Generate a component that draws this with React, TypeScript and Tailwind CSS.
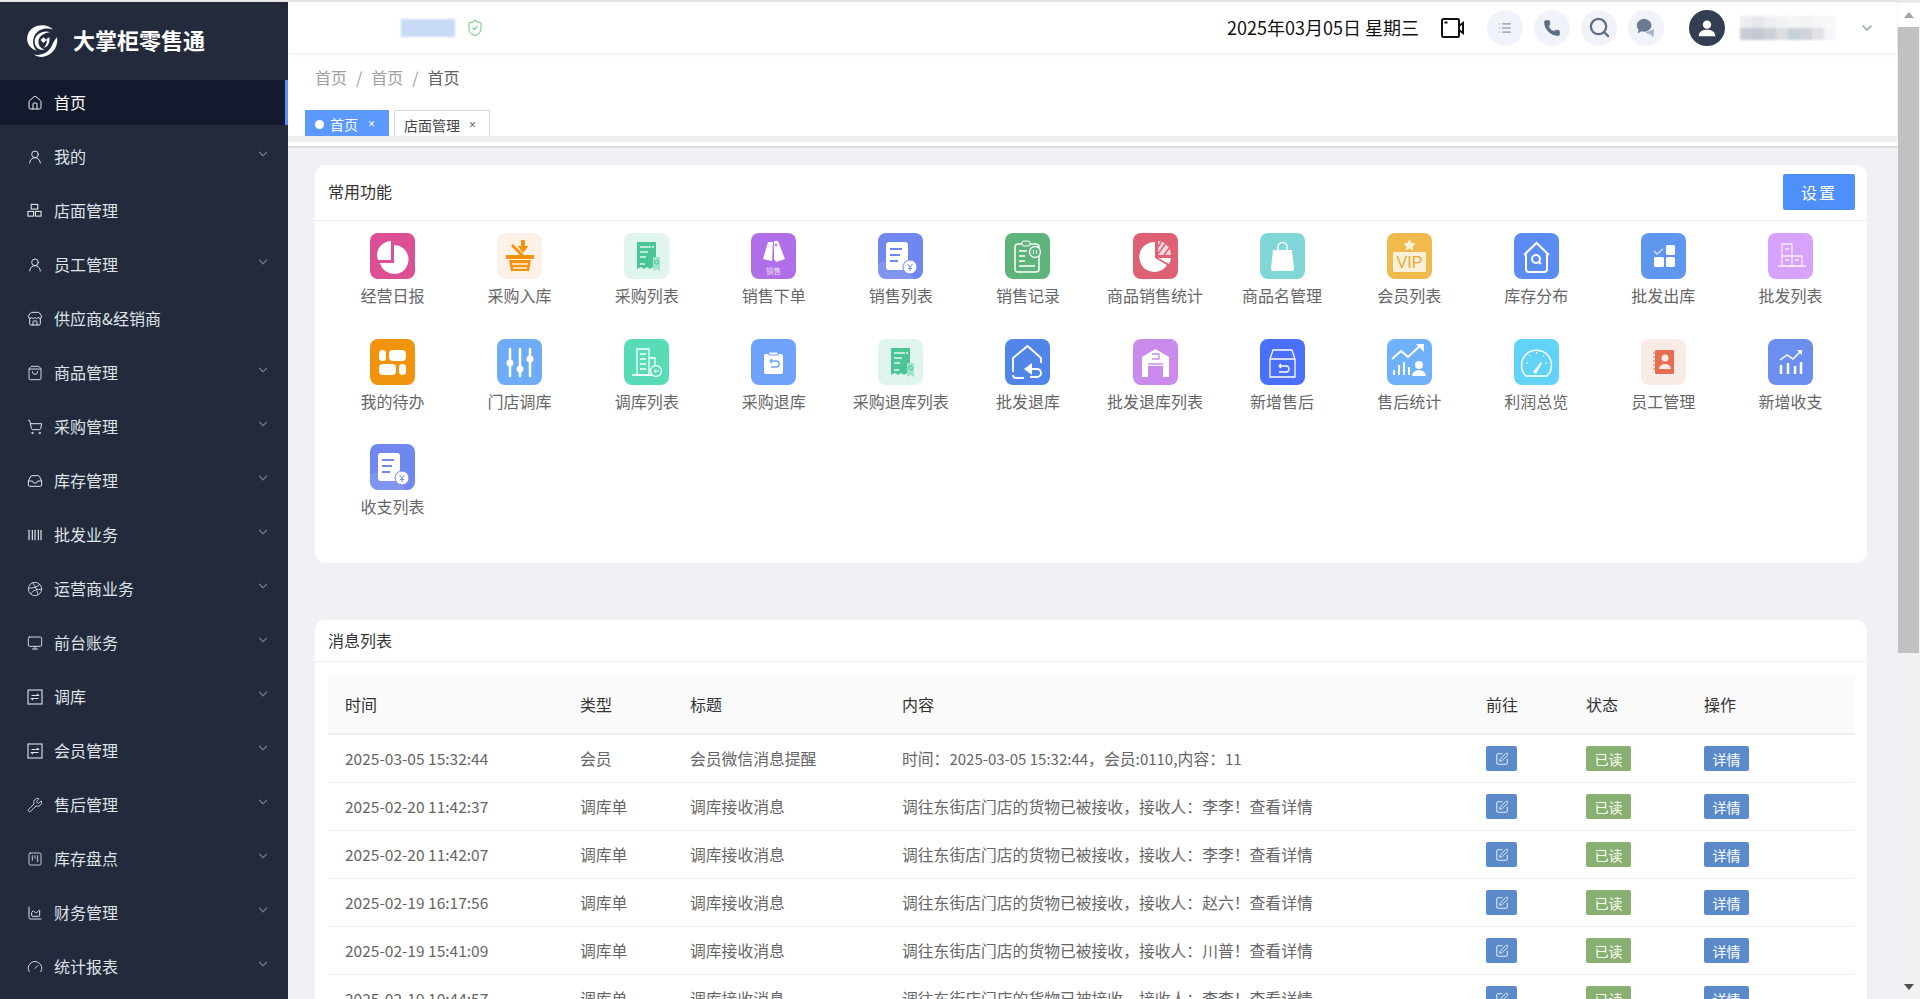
import {
  House, UserRound, ShoppingBag, ShoppingCart, Barcode, Dribbble, Monitor, Wrench, Gauge, ChartArea,
  ChevronDown, ShieldCheck, Search, Phone, SquarePen, List, Store, Inbox, SquareKanban,
} from "lucide-react"
import type { ReactNode } from "react"

const fontCn = "font-['Noto_Sans_CJK_SC','Noto_Sans',sans-serif]"

function TransferIcon() {
  return (
    <svg viewBox="0 0 16 16" className="w-[16px] h-[16px]" fill="none" stroke="currentColor" strokeWidth="1.1">
      <rect x="1" y="1" width="14" height="14" />
      <path d="M4.5 6.5h7l-1.5-1.6M11.5 9.5h-7l1.5 1.6" />
    </svg>
  )
}

function StackIcon() {
  return (
    <svg viewBox="0 0 16 16" className="w-[15px] h-[15px]" fill="none" stroke="currentColor" strokeWidth="1.2">
      <rect x="4.5" y="1.5" width="7" height="5" />
      <rect x="1" y="9" width="6" height="5" />
      <rect x="9" y="9" width="6" height="5" />
    </svg>
  )
}

const lu = "w-[16px] h-[16px]"
const menu: { name: string; icon: ReactNode; sub?: boolean }[] = [
  { name: "首页", icon: <House className={lu} strokeWidth={1.4} /> },
  { name: "我的", icon: <UserRound className={lu} strokeWidth={1.5} />, sub: true },
  { name: "店面管理", icon: <StackIcon /> },
  { name: "员工管理", icon: <UserRound className={lu} strokeWidth={1.5} />, sub: true },
  { name: "供应商&经销商", icon: <Store className={lu} strokeWidth={1.5} /> },
  { name: "商品管理", icon: <ShoppingBag className={lu} strokeWidth={1.4} />, sub: true },
  { name: "采购管理", icon: <ShoppingCart className={lu} strokeWidth={1.5} />, sub: true },
  { name: "库存管理", icon: <Inbox className={lu} strokeWidth={1.5} />, sub: true },
  { name: "批发业务", icon: <Barcode className={lu} strokeWidth={1.8} />, sub: true },
  { name: "运营商业务", icon: <Dribbble className={lu} strokeWidth={1.3} />, sub: true },
  { name: "前台账务", icon: <Monitor className={lu} strokeWidth={1.4} />, sub: true },
  { name: "调库", icon: <TransferIcon />, sub: true },
  { name: "会员管理", icon: <TransferIcon />, sub: true },
  { name: "售后管理", icon: <Wrench className={lu} strokeWidth={1.3} />, sub: true },
  { name: "库存盘点", icon: <SquareKanban className={lu} strokeWidth={1.3} />, sub: true },
  { name: "财务管理", icon: <ChartArea className={lu} strokeWidth={1.5} />, sub: true },
  { name: "统计报表", icon: <Gauge className={lu} strokeWidth={1.4} />, sub: true },
]

// 单据 + 圆形¥ 的图标，销售列表和收支列表共用
const billIcon = (
  <>
    <path d="M0 30 Q22 24 36 46H8a8 8 0 0 1-8-8z" fill="#fff" opacity=".12" />
    <rect x="8" y="9" width="22" height="28" rx="3" fill="#fff" />
    <path d="M12 16h12M12 22h10M12 28h8" stroke="#6f87ee" strokeWidth="2" />
    <circle cx="32" cy="34" r="7" fill="#fff" stroke="#6f87ee" />
    <path d="M29.5 31l2.5 3 2.5-3M32 34v4M30 35.500h4" stroke="#6f87ee" strokeWidth="1" fill="none" />
  </>
)

const receiptIcon = (
  <>
    <path d="M13 9h19v27l-3-2-3 2-3-2-3 2-3-2-4 2z" fill="#4cc596" />
    <path d="M16 14h11M16 19h8M16 24h6M16 31h5" stroke="#e4f6ef" strokeWidth="1.500" />
    <circle cx="29" cy="14" r="1" fill="#e4f6ef" />
    <path d="M29 24h7v14l-3.500-2-3.500 2z" fill="#9fe3c9" />
    <circle cx="32.500" cy="29" r="2" fill="none" stroke="#4cc596" />
  </>
)

const tiles: { name: string; bg: string; icon: ReactNode }[] = [
  { name: "经营日报", bg: "bg-[#dc4f95]", icon: (<>
    <path d="M24 12a14.500 14.500 0 1 1-14 18h14z" fill="#fff" />
    <path d="M21 8v19H8A14 14 0 0 1 21 8z" fill="#fff" />
  </>) },
  { name: "采购入库", bg: "bg-[#fdf2e7]", icon: (<>
    <path d="M24 7h4v6h3.500l-5.500 7-5.500-7H24z" fill="#f2930d" />
    <path d="M15 12l11 11" stroke="#f2930d" strokeWidth="3" />
    <path d="M9 22h28v4H9zM12 27h22l-2 11H14z" fill="#f2930d" />
    <path d="M15 31h16M16 35h14" stroke="#fdf2e7" strokeWidth="1.500" />
  </>) },
  { name: "采购列表", bg: "bg-[#dff5ed]", icon: receiptIcon },
  { name: "销售下单", bg: "bg-[#b06fe8]", icon: (<>
    <path d="M17 9h5l-1 19-9-2z" fill="#fff" />
    <path d="M23 8h4l7 18-9 3-2-3z" fill="#fff" />
    <circle cx="25" cy="12" r="1.300" fill="#b06fe8" />
    <text x="22.500" y="41" fontSize="7.500" fill="#ecdcfa" textAnchor="middle" fontFamily="'Noto Sans CJK SC',sans-serif">销售</text>
  </>) },
  { name: "销售列表", bg: "bg-[#6f87ee]", icon: billIcon },
  { name: "销售记录", bg: "bg-[#5fb47b]", icon: (<>
    <rect x="10" y="11" width="24" height="28" rx="3" fill="none" stroke="#fff" strokeWidth="1.500" />
    <rect x="17" y="8" width="8" height="5" rx="2" fill="#5fb47b" stroke="#fff" />
    <path d="M14 18h8M14 23h6M14 28h6M14 33h16" stroke="#fff" strokeWidth="1.500" />
    <circle cx="30" cy="19" r="5.500" fill="#5fb47b" stroke="#fff" strokeWidth="1.300" />
    <path d="M28.500 17v4M31.500 17v4" stroke="#fff" />
  </>) },
  { name: "商品销售统计", bg: "bg-[#df5f73]", icon: (<>
    <path d="M22 9v16l12 7a15 15 0 1 1-12-23z" fill="#fff" />
    <path d="M36 31l-11-6h13a15 15 0 0 1-2 6z" fill="#fff" />
    <path d="M25 8a14 14 0 0 1 13 14H25z" fill="#fff" opacity=".75" />
    <path d="M28 9l-3 5M33 10l-8 11M37 14l-6 8" stroke="#df5f73" strokeWidth="1.500" />
  </>) },
  { name: "商品名管理", bg: "bg-[#81d7d8]", icon: (<>
    <path d="M13 17h19l2 19a2 2 0 0 1-2 2H13a2 2 0 0 1-2-2z" fill="#fff" />
    <path d="M18 19v-5a4.500 4.500 0 0 1 9 0v5" fill="none" stroke="#fff" strokeWidth="1.500" />
  </>) },
  { name: "会员列表", bg: "bg-[#f0bb4c]", icon: (<>
    <path d="M22.500 6l1.900 3.800 4.200.6-3 3 .7 4.200-3.800-2-3.800 2 .7-4.200-3-3 4.200-.6z" fill="#fbf0d8" />
    <rect x="6" y="19" width="33" height="20" rx="1" fill="#fbf0d8" />
    <text x="22.500" y="35" fontSize="16" fill="#e9a93a" textAnchor="middle" fontFamily="'Liberation Sans',sans-serif">VIP</text>
  </>) },
  { name: "库存分布", bg: "bg-[#5b8bf5]", icon: (<>
    <path d="M10 22L22.500 10 35 22M12 21v15a3 3 0 0 0 3 3h15a3 3 0 0 0 3-3V21" fill="none" stroke="#fff" strokeWidth="2" />
    <circle cx="22" cy="26" r="4" fill="none" stroke="#fff" strokeWidth="2" />
    <path d="M25 29l2 2" stroke="#fff" strokeWidth="2" />
  </>) },
  { name: "批发出库", bg: "bg-[#5f96ee]", icon: (<>
    <rect x="25" y="12" width="9" height="10" rx="1.500" fill="#fff" />
    <rect x="13" y="24" width="10" height="10" rx="1.500" fill="#fff" />
    <rect x="25" y="24" width="9" height="10" rx="1.500" fill="#fff" />
    <path d="M13 18l3 3 6-5" fill="none" stroke="#cfe0fb" strokeWidth="1.500" />
  </>) },
  { name: "批发列表", bg: "bg-[#d7a2fb]", icon: (<>
    <path d="M14 11h10v12H14zM14 23h10v10H14zM24 23h10v10H24z" fill="none" stroke="#f7ebff" strokeWidth="1.300" />
    <path d="M10 33h28M17 16h4M17 27h4M27 27h4" stroke="#f7ebff" strokeWidth="1.300" />
  </>) },
  { name: "我的待办", bg: "bg-[#f2930d]", icon: (<>
    <rect x="9" y="11" width="7" height="11" rx="3.500" fill="#fff" />
    <rect x="19" y="11" width="17" height="11" rx="4" fill="#fff" />
    <rect x="9" y="25" width="17" height="11" rx="4" fill="#fff" />
    <rect x="29" y="25" width="7" height="11" rx="3.500" fill="#fff" />
  </>) },
  { name: "门店调库", bg: "bg-[#6fabf7]", icon: (<>
    <path d="M13 10v27M23 10v27M33 10v27" stroke="#fff" strokeWidth="2.500" strokeLinecap="round" />
    <circle cx="13" cy="24" r="3.500" fill="#fff" />
    <circle cx="23" cy="30" r="3.500" fill="#fff" />
    <circle cx="33" cy="20" r="3.500" fill="#fff" />
  </>) },
  { name: "调库列表", bg: "bg-[#58dcb7]", icon: (<>
    <path d="M13 10h12v26H13zM25 19h6v10" fill="none" stroke="#fff" strokeWidth="1.300" />
    <path d="M16 15h6M16 20h6M16 25h6M16 30h6M8 36h20" stroke="#fff" strokeWidth="1.300" />
    <circle cx="32" cy="32" r="5.500" fill="#58dcb7" stroke="#fff" strokeWidth="1.300" />
    <path d="M35 32h-5M32 30l-2 2 2 2" fill="none" stroke="#fff" />
  </>) },
  { name: "采购退库", bg: "bg-[#6fa2fb]", icon: (<>
    <rect x="13" y="15" width="19" height="20" rx="2" fill="#fff" />
    <rect x="18" y="13" width="9" height="3" fill="#fff" stroke="#6fa2fb" />
    <path d="M19 22h6a3 3 0 0 1 0 6h-5M19 22l2-2M19 22l2 2" fill="none" stroke="#6fa2fb" strokeWidth="1.500" />
  </>) },
  { name: "采购退库列表", bg: "bg-[#dff5ed]", icon: receiptIcon },
  { name: "批发退库", bg: "bg-[#5186e8]", icon: (<>
    <path d="M8 33V19L22.500 7 36 19v5M19 39h-8a3 3 0 0 1-3-3" fill="none" stroke="#fff" strokeWidth="1.800" />
    <path d="M21 30h11a3.500 3.500 0 0 1 0 8h-7" fill="none" stroke="#fff" strokeWidth="2" />
    <path d="M27 24v12l-8-6z" fill="#fff" />
  </>) },
  { name: "批发退库列表", bg: "bg-[#ca8bec]", icon: (<>
    <path d="M9 18L22.500 10 36 18v20h-6V27H15v11H9z" fill="#fff" />
    <path d="M19 15h7v5h-7M15 25h15" fill="none" stroke="#ca8bec" strokeWidth="1.300" />
  </>) },
  { name: "新增售后", bg: "bg-[#4a6ffb]", icon: (<>
    <path d="M10 20l3-9h19l3 9v18H10zM10 20h25" fill="none" stroke="#fff" strokeWidth="1.300" />
    <path d="M19 27h7a2.500 2.500 0 0 1 0 6h-7M19 27l2-2M19 27l2 2" fill="none" stroke="#fff" strokeWidth="1.300" />
  </>) },
  { name: "售后统计", bg: "bg-[#6fb2fb]", icon: (<>
    <path d="M5 20l9-8 7 6 13-12" fill="none" stroke="#fff" strokeWidth="2" />
    <path d="M29 5h8v8z" fill="#fff" />
    <path d="M7 36v-5M12 36v-10M17 36v-13M22 36v-8" stroke="#fff" strokeWidth="2" />
    <circle cx="32" cy="26" r="4" fill="#fff" />
    <path d="M25 37a7 6 0 0 1 14 0z" fill="#fff" />
  </>) },
  { name: "利润总览", bg: "bg-[#62d3f7]", icon: (<>
    <path d="M12 37a15 15 0 1 1 21 0z" fill="none" stroke="#fff" strokeWidth="1.500" />
    <path d="M19 33l8-10 1 1-6 11z" fill="#fff" />
    <path d="M22.500 13v2M12 24h2M33 24h-2M15 16l1.500 1.500M30 16l-1.500 1.500" stroke="#fff" />
  </>) },
  { name: "员工管理", bg: "bg-[#fbebe6]", icon: (<>
    <rect x="14" y="11" width="19" height="24" rx="1" fill="#e76f51" />
    <path d="M12 14h4M12 18h4M12 22h4M12 26h4M12 30h4" stroke="#e76f51" strokeWidth="1.200" />
    <circle cx="24" cy="19" r="3.500" fill="#fbebe6" />
    <path d="M18 30a6 5 0 0 1 12 0z" fill="#fbebe6" />
  </>) },
  { name: "新增收支", bg: "bg-[#6c8eee]", icon: (<>
    <path d="M13 35v-9M20 35V24M27 35v-8M33 35V23" stroke="#fff" strokeWidth="2.500" />
    <path d="M12 21l7-5 6 4 8-8" fill="none" stroke="#fff" strokeWidth="1.500" />
    <path d="M29 11h5v5z" fill="#fff" />
  </>) },
  { name: "收支列表", bg: "bg-[#6f87ee]", icon: billIcon },
]

const transferMsg = (who: string) => `调往东街店门店的货物已被接收，接收人：${who}！查看详情`

const rows: [string, string, string, ReactNode][] = [
  ["2025-03-05 15:32:44", "会员", "会员微信消息提醒", (
    <>时间：<span className="text-[15px]">2025-03-05 15:32:44</span>，会员:<span className="text-[15px]">0110</span>,内容：<span className="text-[15px]">11</span></>
  )],
  ["2025-02-20 11:42:37", "调库单", "调库接收消息", transferMsg("李李")],
  ["2025-02-20 11:42:07", "调库单", "调库接收消息", transferMsg("李李")],
  ["2025-02-19 16:17:56", "调库单", "调库接收消息", transferMsg("赵六")],
  ["2025-02-19 15:41:09", "调库单", "调库接收消息", transferMsg("川普")],
  ["2025-02-19 10:44:57", "调库单", "调库接收消息", transferMsg("李李")],
]

function Sidebar() {
  return (
    <div className="w-[288px] shrink-0 h-full bg-[#232a3b] overflow-hidden">
      <div className="h-[78px] pl-[27px] flex items-center gap-[15px]">
        <svg viewBox="0 0 32 34" className="w-[31px] h-[34px]" fill="#fff">
          <path d="M1 10C4 2 14-1 22 2c2 .8 3.500 1.800 5 3-8-2.500-16 0-19 6-3 6-2 12 2 16C3 25-2 18 1 10z" />
          <path d="M31 13c1.500 9-4 18-13 20-4 1-8 0-11-2 8 1.500 15-2 18-8 2-4 3-7 6-10z" />
          <path d="M8 16c1-6 9-11 16-8-6 .5-11 3.500-12 8-1 5 2 9 6 9.500C13 28 7 23 8 16z" />
          <path d="M23 13c1 5-1 10-6 11 3-2 4-6 3-9z" />
          <path d="M17 13l3 3-3 3-3-3z" />
        </svg>
        <span className={`text-[22px] leading-none font-bold text-white -mt-[4px] ${fontCn}`}>大掌柜零售通</span>
      </div>
      <div className="flex flex-col gap-[9px]">
        {menu.map((m, i) => (
          <div
            key={m.name}
            className={`h-[45px] shrink-0 flex items-center pl-[27px] pr-[18px] ${i === 0 ? "bg-[#141a2e] border-r-[3px] border-[#5b8ff9] text-white" : "text-[#dfe3e8]"}`}
          >
            <span className="w-[27px] shrink-0 flex items-center">{m.icon}</span>
            <span className={`text-[16px] leading-none flex-1 -mt-[2px] ${fontCn}`}>{m.name}</span>
            {m.sub && <ChevronDown className="w-[14px] h-[14px] text-[#6b7280] -mt-[5px]" strokeWidth={2.5} />}
          </div>
        ))}
      </div>
    </div>
  )
}

function RoundBtn({ children }: { children: ReactNode }) {
  return <div className="w-[36px] h-[36px] rounded-full bg-[#f0f3f9] flex items-center justify-center">{children}</div>
}

function Header() {
  const top = ["bg-[#eceef1]", "bg-[#e6e8ec]", "bg-[#eceef0]", "bg-[#f1f2f4]", "bg-[#f4f5f6]", "bg-[#f2f3f5]", "bg-[#f5f6f7]", "bg-[#f8f8f9]"]
  const bottom = ["bg-[#c8ccd4]", "bg-[#c4c8d0]", "bg-[#ccd0d6]", "bg-[#dcdee1]", "bg-[#c8d0da]", "bg-[#d0d4da]", "bg-[#e0e2e6]", "bg-[#f4f6fa]"]
  return (
    <div className="h-[51px] shrink-0 bg-white shadow-[0_1px_4px_rgba(0,0,0,0.08)] flex items-center relative z-10">
      <div className="ml-[113px] w-[54px] h-[18px] bg-[#c9daf6] blur-[1px]" />
      <ShieldCheck className="ml-[11px] w-[18px] h-[20px] text-[#7fd08e]" strokeWidth={1.5} />
      <div className="flex-1" />
      <span className={`text-[18px] leading-none text-[#111] -mt-[2px] ${fontCn}`}>2025年03月05日 星期三</span>
      <svg viewBox="0 0 24 20" className="ml-[22px] w-[24px] h-[20px]" fill="none" stroke="#111" strokeWidth="2">
        <rect x="1" y="1" width="17" height="18" rx="1.500" />
        <path d="M3.500 4.500h3" />
        <path d="M18 8l4-3v10l-4-3" />
      </svg>
      <div className="ml-[22px] flex gap-[11px]">
        <RoundBtn><List className="w-[14px] h-[14px] text-[#6b778c]" strokeWidth={1.6} /></RoundBtn>
        <RoundBtn><Phone className="w-[18px] h-[18px] text-[#5f6f88] fill-[#5f6f88]" strokeWidth={1} /></RoundBtn>
        <RoundBtn><Search className="w-[23px] h-[23px] text-[#5f6f88]" strokeWidth={2.4} /></RoundBtn>
        <RoundBtn>
          <svg viewBox="0 0 24 24" className="w-[22px] h-[22px]">
            <path d="M2 9a8 7 0 1 1 5 6.500L3 18l1-4a7 7 0 0 1-2-5z" fill="#6b7a92" />
            <path d="M11 17l10-4-1 9-3-3z" fill="#a9b4c6" />
          </svg>
        </RoundBtn>
      </div>
      <div className="ml-[25px] w-[36px] h-[36px] rounded-full bg-[#343e52] flex items-center justify-center">
        <svg viewBox="0 0 24 24" className="w-[20px] h-[20px]" fill="#fff">
          <circle cx="12" cy="8" r="5" />
          <path d="M2 22c0-6 5-8 10-8s10 2 10 8z" />
        </svg>
      </div>
      <div className="ml-[15px] w-[96px] flex flex-col blur-[1px]">
        <div className="flex h-[12px]">{top.map((c, i) => <div key={i} className={`flex-1 ${c}`} />)}</div>
        <div className="flex h-[12px]">{bottom.map((c, i) => <div key={i} className={`flex-1 ${c}`} />)}</div>
      </div>
      <ChevronDown className="ml-[23px] mr-[22px] w-[16px] h-[16px] text-[#8c9ab0]" strokeWidth={2} />
    </div>
  )
}

function Tabs() {
  const close = "font-['Liberation_Sans',sans-serif] text-[12px]"
  return (
    <div className="bg-white shrink-0">
      <div className={`h-[83px] flex flex-col justify-between pl-[27px] ${fontCn}`}>
        <div className="flex items-center text-[16px] leading-none text-[#a0a0a0] mt-[16px]">
          <span>首页</span>
          <span className="mx-[9px]">/</span>
          <span>首页</span>
          <span className="mx-[9px]">/</span>
          <span className="text-[#606266]">首页</span>
        </div>
        <div className="flex gap-[5px] -ml-[10px]">
          <div className="w-[84px] h-[26px] bg-[#5b98ff] text-white flex items-center pl-[10px] pt-[2px] text-[14px] leading-none">
            <span className="w-[9px] h-[9px] rounded-full bg-white mr-[6px]" />
            <span>首页</span>
            <span className={`ml-[10px] ${close}`}>×</span>
          </div>
          <div className="w-[96px] h-[26px] bg-white border border-b-0 border-[#d9d9d9] text-[#444] flex items-center pl-[9px] pt-[2px] text-[14px] leading-none">
            <span>店面管理</span>
            <span className={`ml-[9px] text-[#666] ${close}`}>×</span>
          </div>
        </div>
      </div>
      <div className="h-[6px] bg-[#f0f0f0]" />
      <div className="h-[4px] bg-white" />
      <div className="h-[2px] bg-[#d8dbe0]" />
    </div>
  )
}

function CommonFunctions() {
  return (
    <div className={`h-[398px] bg-white rounded-[10px] ${fontCn}`}>
      <div className="h-[56px] border-b border-[#eeeeee] pl-[13px] pr-[12px] flex items-center justify-between">
        <span className="text-[16px] leading-none text-[#333] -mt-[3px]">常用功能</span>
        <button className="w-[72px] h-[36px] rounded-[2px] bg-[#4f8ffa] text-white text-[16px] tracking-[2px] -mt-[1px]">设置</button>
      </div>
      <div className="grid grid-cols-12 pl-[14px] pr-[13px] pt-[12px] auto-rows-[105.5px]">
        {tiles.map(t => (
          <div key={t.name} className="flex flex-col items-center">
            <div className={`w-[45px] h-[46px] rounded-[8px] ${t.bg}`}>
              <svg viewBox="0 0 45 46" className="w-full h-full">{t.icon}</svg>
            </div>
            <span className="mt-[4px] text-[16px] leading-[24px] text-[#666] whitespace-nowrap">{t.name}</span>
          </div>
        ))}
      </div>
    </div>
  )
}

function MessageList() {
  const th = "h-[60px] pl-[17px] pr-0 text-left font-normal text-[16px] text-[#333] border-b-2 border-[#eeeeee] bg-[#fafafa]"
  const td = "h-[48px] pl-[17px] pr-0 text-[15.800px] text-[#666] border-b border-[#eeeeee] whitespace-nowrap"
  const tag = "h-[25px] rounded-[2px] text-white text-[14px] leading-none flex items-center justify-center"
  return (
    <div className={`mt-[57px] bg-white rounded-t-[10px] pb-[40px] ${fontCn}`}>
      <div className="h-[42px] border-b border-[#eeeeee] pl-[13px] flex items-center">
        <span className="text-[16px] leading-none text-[#333] -mt-[1px]">消息列表</span>
      </div>
      <div className="pl-[13px] pt-[13px]">
        <table className="w-[1527px] table-fixed border-separate border-spacing-0">
          <colgroup>
            <col className="w-[235px]" />
            <col className="w-[110px]" />
            <col className="w-[212px]" />
            <col className="w-[584px]" />
            <col className="w-[100px]" />
            <col className="w-[118px]" />
            <col className="w-[168px]" />
          </colgroup>
          <thead>
            <tr>
              {["时间", "类型", "标题", "内容", "前往", "状态", "操作"].map(h => <th key={h} className={th}>{h}</th>)}
            </tr>
          </thead>
          <tbody>
            {rows.map(r => (
              <tr key={r[0]}>
                <td className={td}><span className="text-[15.500px]">{r[0]}</span></td>
                <td className={td}>{r[1]}</td>
                <td className={td}>{r[2]}</td>
                <td className={td}>{r[3]}</td>
                <td className={td}>
                  <div className={`${tag} w-[31px] bg-[#5a8ac9]`}><SquarePen className="w-[14px] h-[14px]" strokeWidth={1.5} /></div>
                </td>
                <td className={td}><div className={`${tag} w-[45px] bg-[#88b070]`}>已读</div></td>
                <td className={td}><div className={`${tag} w-[45px] bg-[#5a8ac9]`}>详情</div></td>
              </tr>
            ))}
          </tbody>
        </table>
      </div>
    </div>
  )
}

function Scrollbar() {
  return (
    <div className="w-[23px] shrink-0 h-full pt-[1px] bg-[#f1f1f1] flex flex-col">
      <div className="h-[24px] bg-white flex items-center justify-center">
        <div className="w-0 h-0 border-x-[5px] border-x-transparent border-b-[6px] border-b-[#a3a3a3]" />
      </div>
      <div className="h-[626px] w-[21px] ml-[1px] bg-[#c1c1c1]" />
      <div className="flex-1" />
      <div className="h-[24px] flex items-center justify-center">
        <div className="w-0 h-0 border-x-[5px] border-x-transparent border-t-[6px] border-t-[#505050]" />
      </div>
    </div>
  )
}

export default function App() {
  return (
    <div className="w-screen h-screen overflow-hidden bg-[#e6e6e6] pt-[2px] flex">
      <Sidebar />
      <div className="flex-1 min-w-0 h-full flex flex-col">
        <Header />
        <Tabs />
        <div className="flex-1 min-h-0 overflow-hidden bg-[#eff1f5] pl-[27px] pr-[30px] pt-[17px]">
          <CommonFunctions />
          <MessageList />
        </div>
      </div>
      <Scrollbar />
    </div>
  )
}
